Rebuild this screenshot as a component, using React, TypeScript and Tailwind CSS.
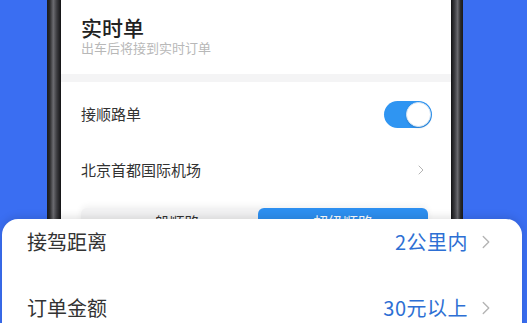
import React from 'react';
import { ChevronRight } from 'lucide-react';

const font = { fontFamily: '"Noto Sans CJK SC", "Noto Sans", sans-serif' };

function Toggle() {
  return (
    <div className="w-[48px] h-[27px] rounded-full bg-[#2f95f2] flex items-center justify-end pr-[1px]">
      <div className="w-[25px] h-[25px] rounded-full bg-white border border-[#d6e6f5] shadow-[0_1px_2px_rgba(0,0,0,0.15)]" />
    </div>
  );
}

function FilterRow({ label, value }: { label: string; value: string }) {
  return (
    <div className="h-[26px] flex items-center justify-between">
      <span className="text-[20px] text-[#333]">{label}</span>
      <div className="flex items-center gap-[7px]">
        <span className="text-[20px] tracking-[0.5px] text-[#2d6fd4]">{value}</span>
        <ChevronRight size={22} strokeWidth={1.5} className="text-[#b4b4b4]" />
      </div>
    </div>
  );
}

export default function App() {
  return (
    <div className="relative w-[527px] h-[323px] overflow-hidden bg-[#3a6ef2]" style={font}>
      {/* phone */}
      <div className="ml-[47px] w-[416px] h-[323px] flex">
        <div className="w-[14px] bg-[linear-gradient(90deg,#1a1a1c_0%,#2a2a2c_20%,#6b6b70_45%,#3c3c40_70%,#121214_100%)]" />
        <div className="w-[390px] bg-white flex flex-col">
          <div className="h-[74px] pt-[14px] pl-[20px]">
            <div className="text-[21px] leading-[26px] font-medium text-[#222]">实时单</div>
            <div className="text-[13px] leading-[16px] text-[#b8b8b8]">出车后将接到实时订单</div>
          </div>
          <div className="h-[8px] bg-[#f4f4f5]" />
          <div className="h-[64px] flex items-center justify-between pl-[20px] pr-[19px]">
            <span className="text-[15px] text-[#333]">接顺路单</span>
            <Toggle />
          </div>
          <div className="h-[48px] flex items-center justify-between pl-[20px] pr-[22px]">
            <span className="text-[15px] text-[#333]">北京首都国际机场</span>
            <ChevronRight size={16} strokeWidth={1.5} className="text-[#b4b4b4]" />
          </div>
          <div className="mt-[14px] ml-[20px] mr-[23px] h-[28px] flex rounded-[6px] bg-[#f2f2f3] shadow-[0_-2px_6px_rgba(0,0,0,0.06)]">
            <div className="flex-1 flex items-center justify-center text-[15px] text-[#333]">一般顺路</div>
            <div className="w-[170px] flex items-center justify-center rounded-[6px] bg-[#2d8ff0] text-[15px] text-white">超级顺路</div>
          </div>
        </div>
        <div className="w-[12px] bg-[linear-gradient(90deg,#121214_0%,#3c3c40_30%,#6b6b70_55%,#2a2a2c_80%,#1a1a1c_100%)]" />
      </div>

      {/* bottom sheet over the phone */}
      <div className="absolute left-[2px] top-[219px] w-[520px] h-[120px] rounded-t-[16px] bg-white pt-[10px] pl-[25px] pr-[25px] flex flex-col gap-[40px] shadow-[0_-2px_8px_rgba(0,0,0,0.12)]">
        <FilterRow label="接驾距离" value="2公里内" />
        <FilterRow label="订单金额" value="30元以上" />
      </div>
    </div>
  );
}
